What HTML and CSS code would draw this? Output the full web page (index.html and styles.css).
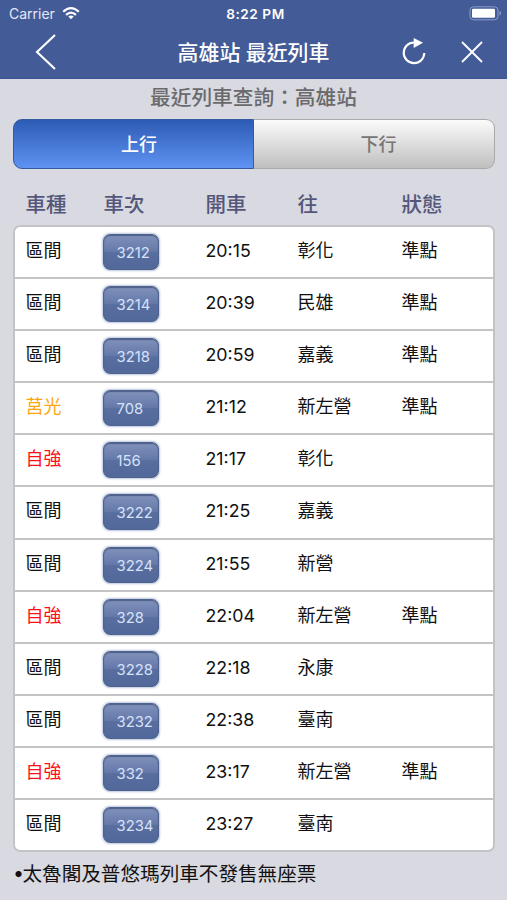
FILE: index.html
```html
<!DOCTYPE html>
<html lang="zh-Hant">
<head>
<meta charset="utf-8">
<title>高雄站 最近列車</title>
<link rel="stylesheet" href="styles.css">
</head>
<body>
<header class="top">
  <div class="status">
    <div class="carrier"><span>Carrier</span>
      <svg class="wifi" width="18" height="13" viewBox="0 0 18 13"><g fill="none" stroke="#fff" stroke-width="2.2"><path d="M1.2 4.8Q9-2.4 16.8 4.8"/><path d="M4.1 7.9Q9 3.4 13.9 7.9"/></g><path d="M9 12.2 6.3 9.6Q9 7.4 11.7 9.6Z" fill="#fff"/></svg>
    </div>
    <div class="clock">8:22 PM</div>
    <svg class="battery" width="33" height="15" viewBox="0 0 33 15"><rect x="1" y=".8" width="28" height="13" rx="3.5" fill="none" stroke="#8d9cc6" stroke-width="1"/><rect x="3" y="2.8" width="23" height="9" rx="1.3" fill="#fff"/><path d="M30.5 5v4.6q1.6-.6 1.6-2.3t-1.6-2.3z" fill="#8d9cc6"/></svg>
  </div>
  <nav class="nav">
    <svg class="back" width="22" height="38" viewBox="0 0 22 38"><path d="M20 2 2 19 20 36" fill="none" stroke="#fff" stroke-width="2.1"/></svg>
    <h1>高雄站 最近列車</h1>
    <svg class="reload" width="26" height="30" viewBox="0 0 26 30"><path d="M15.5 5.5H13A10.3 10.3 0 1 0 23.3 16" fill="none" stroke="#fff" stroke-width="2.1"/><path d="M12.7 1 22 5.8 12.7 11Z" fill="#fff"/></svg>
    <svg class="close" width="22" height="22" viewBox="0 0 22 22"><path d="M1 1 21 21M21 1 1 21" stroke="#fff" stroke-width="1.8"/></svg>
  </nav>
</header>
<main>
  <h2>最近列車查詢：高雄站</h2>
  <div class="tabs"><div class="tab on">上行</div><div class="tab">下行</div></div>
  <div class="grid head"><span>車種</span><span>車次</span><span>開車</span><span>往</span><span>狀態</span></div>
  <div class="list">
    <div class="grid row"><span>區間</span><b class="no">3212</b><span class="time">20:15</span><span>彰化</span><span>準點</span></div>
    <div class="grid row"><span>區間</span><b class="no">3214</b><span class="time">20:39</span><span>民雄</span><span>準點</span></div>
    <div class="grid row"><span>區間</span><b class="no">3218</b><span class="time">20:59</span><span>嘉義</span><span>準點</span></div>
    <div class="grid row"><span class="orange">莒光</span><b class="no">708</b><span class="time">21:12</span><span>新左營</span><span>準點</span></div>
    <div class="grid row"><span class="red">自強</span><b class="no">156</b><span class="time">21:17</span><span>彰化</span></div>
    <div class="grid row"><span>區間</span><b class="no">3222</b><span class="time">21:25</span><span>嘉義</span></div>
    <div class="grid row"><span>區間</span><b class="no">3224</b><span class="time">21:55</span><span>新營</span></div>
    <div class="grid row"><span class="red">自強</span><b class="no">328</b><span class="time">22:04</span><span>新左營</span><span>準點</span></div>
    <div class="grid row"><span>區間</span><b class="no">3228</b><span class="time">22:18</span><span>永康</span></div>
    <div class="grid row"><span>區間</span><b class="no">3232</b><span class="time">22:38</span><span>臺南</span></div>
    <div class="grid row"><span class="red">自強</span><b class="no">332</b><span class="time">23:17</span><span>新左營</span><span>準點</span></div>
    <div class="grid row"><span>區間</span><b class="no">3234</b><span class="time">23:27</span><span>臺南</span></div>
  </div>
  <p class="note"><span class="bullet">•</span>太魯閣及普悠瑪列車不發售無座票</p>
</main>
</body>
</html>
```
FILE: styles.css
```css
* { box-sizing: border-box; }
body {
  margin: 0;
  height: 900px;
  overflow: hidden;
  background: #d8d9e1;
  color: #111;
  font-family: Inter, "Noto Sans CJK TC", sans-serif;
}
svg { display: block; }
.top { height: 79px; background: #435c98; color: #fff; border-bottom: 1px solid #3b5594; }
.status {
  display: grid;
  grid-template-columns: 1fr auto 1fr;
  align-items: center;
  height: 27px;
  padding: 0 5px 0 9px;
}
.carrier { display: flex; align-items: center; gap: 7px; font-size: 14px; color: #e3e8f5; }
.clock { font-size: 13.6px; font-weight: 600; letter-spacing: .55px; }
.battery { justify-self: end; }
.nav {
  display: grid;
  grid-template-columns: 142px 259px 60px 46px;
  align-items: center;
  height: 50px;
}
.back { margin-left: 35px; }
.nav h1 { margin: 0; padding-right: 36px; text-align: center; font-size: 20.9px; line-height: 30px; padding-top: 1px; font-weight: 500; white-space: nowrap; }
h2 {
  margin: 0;
  height: 40px;
  line-height: 38px;
  text-align: center;
  font-size: 20.7px;
  font-weight: 500;
  color: #6a6a6c;
}
.tabs { display: flex; height: 50px; margin: 0 12px 0 13px; }
.tab {
  width: 241px;
  border: 1px solid #aaa;
  border-left: 0;
  border-radius: 0 9px 9px 0;
  background: linear-gradient(#fbfbfb, #bfbfbf);
  color: #757575;
  font-size: 18px;
  font-weight: 500;
  line-height: 49px;
  padding-left: 9px;
  text-align: center;
}
.tab.on {
  border: 1px solid #365a9e;
  border-radius: 9px 0 0 9px;
  background: linear-gradient(#2d5cb5, #5f92f2);
  color: #fff;
  padding-left: 11px;
}
.grid {
  display: grid;
  grid-template-columns: 78px 102px 92px 104px 1fr;
}
.head {
  height: 56px;
  padding-left: 25.5px;
  line-height: 71px;
  font-size: 20.5px;
  font-weight: 500;
  color: #54577a;
}
.list {
  height: 627px;
  margin: 0 12px 0 13px;
  display: grid;
  grid-template-rows: repeat(11, 52.1px) 1fr;
  background: #fff;
  border: 2px solid #c2c4c7;
  border-radius: 7px;
  overflow: hidden;
}
.row { padding-left: 10.5px; font-size: 18px; line-height: 48px; border-bottom: 2px solid #c3c4c6; }
.row:last-child { border-bottom: 0; }
.time { font-size: 17.8px; }
.no {
  width: 56px;
  height: 36px;
  margin: 7px 0 0 -1px;
  padding-left: 13px;
  border: 1px solid #4f638f;
  border-radius: 7px;
  background: linear-gradient(#8091ba, #6579aa 48%, #586e9f 52%, #52689a);
  box-shadow: inset 0 1px 1px #4e5f86, 0 0 2px 1px #bac6dd;
  color: #d6e2fa;
  font-size: 14.8px;
  font-weight: 400;
  line-height: 36px;
}
.orange { color: #fca510; }
.red { color: #fc1018; }
.note {
  display: flex;
  align-items: center;
  margin: 0;
  padding-left: 13px;
  height: 41px;
  font-size: 19.6px;
}
.bullet { width: 9.5px; }
```
